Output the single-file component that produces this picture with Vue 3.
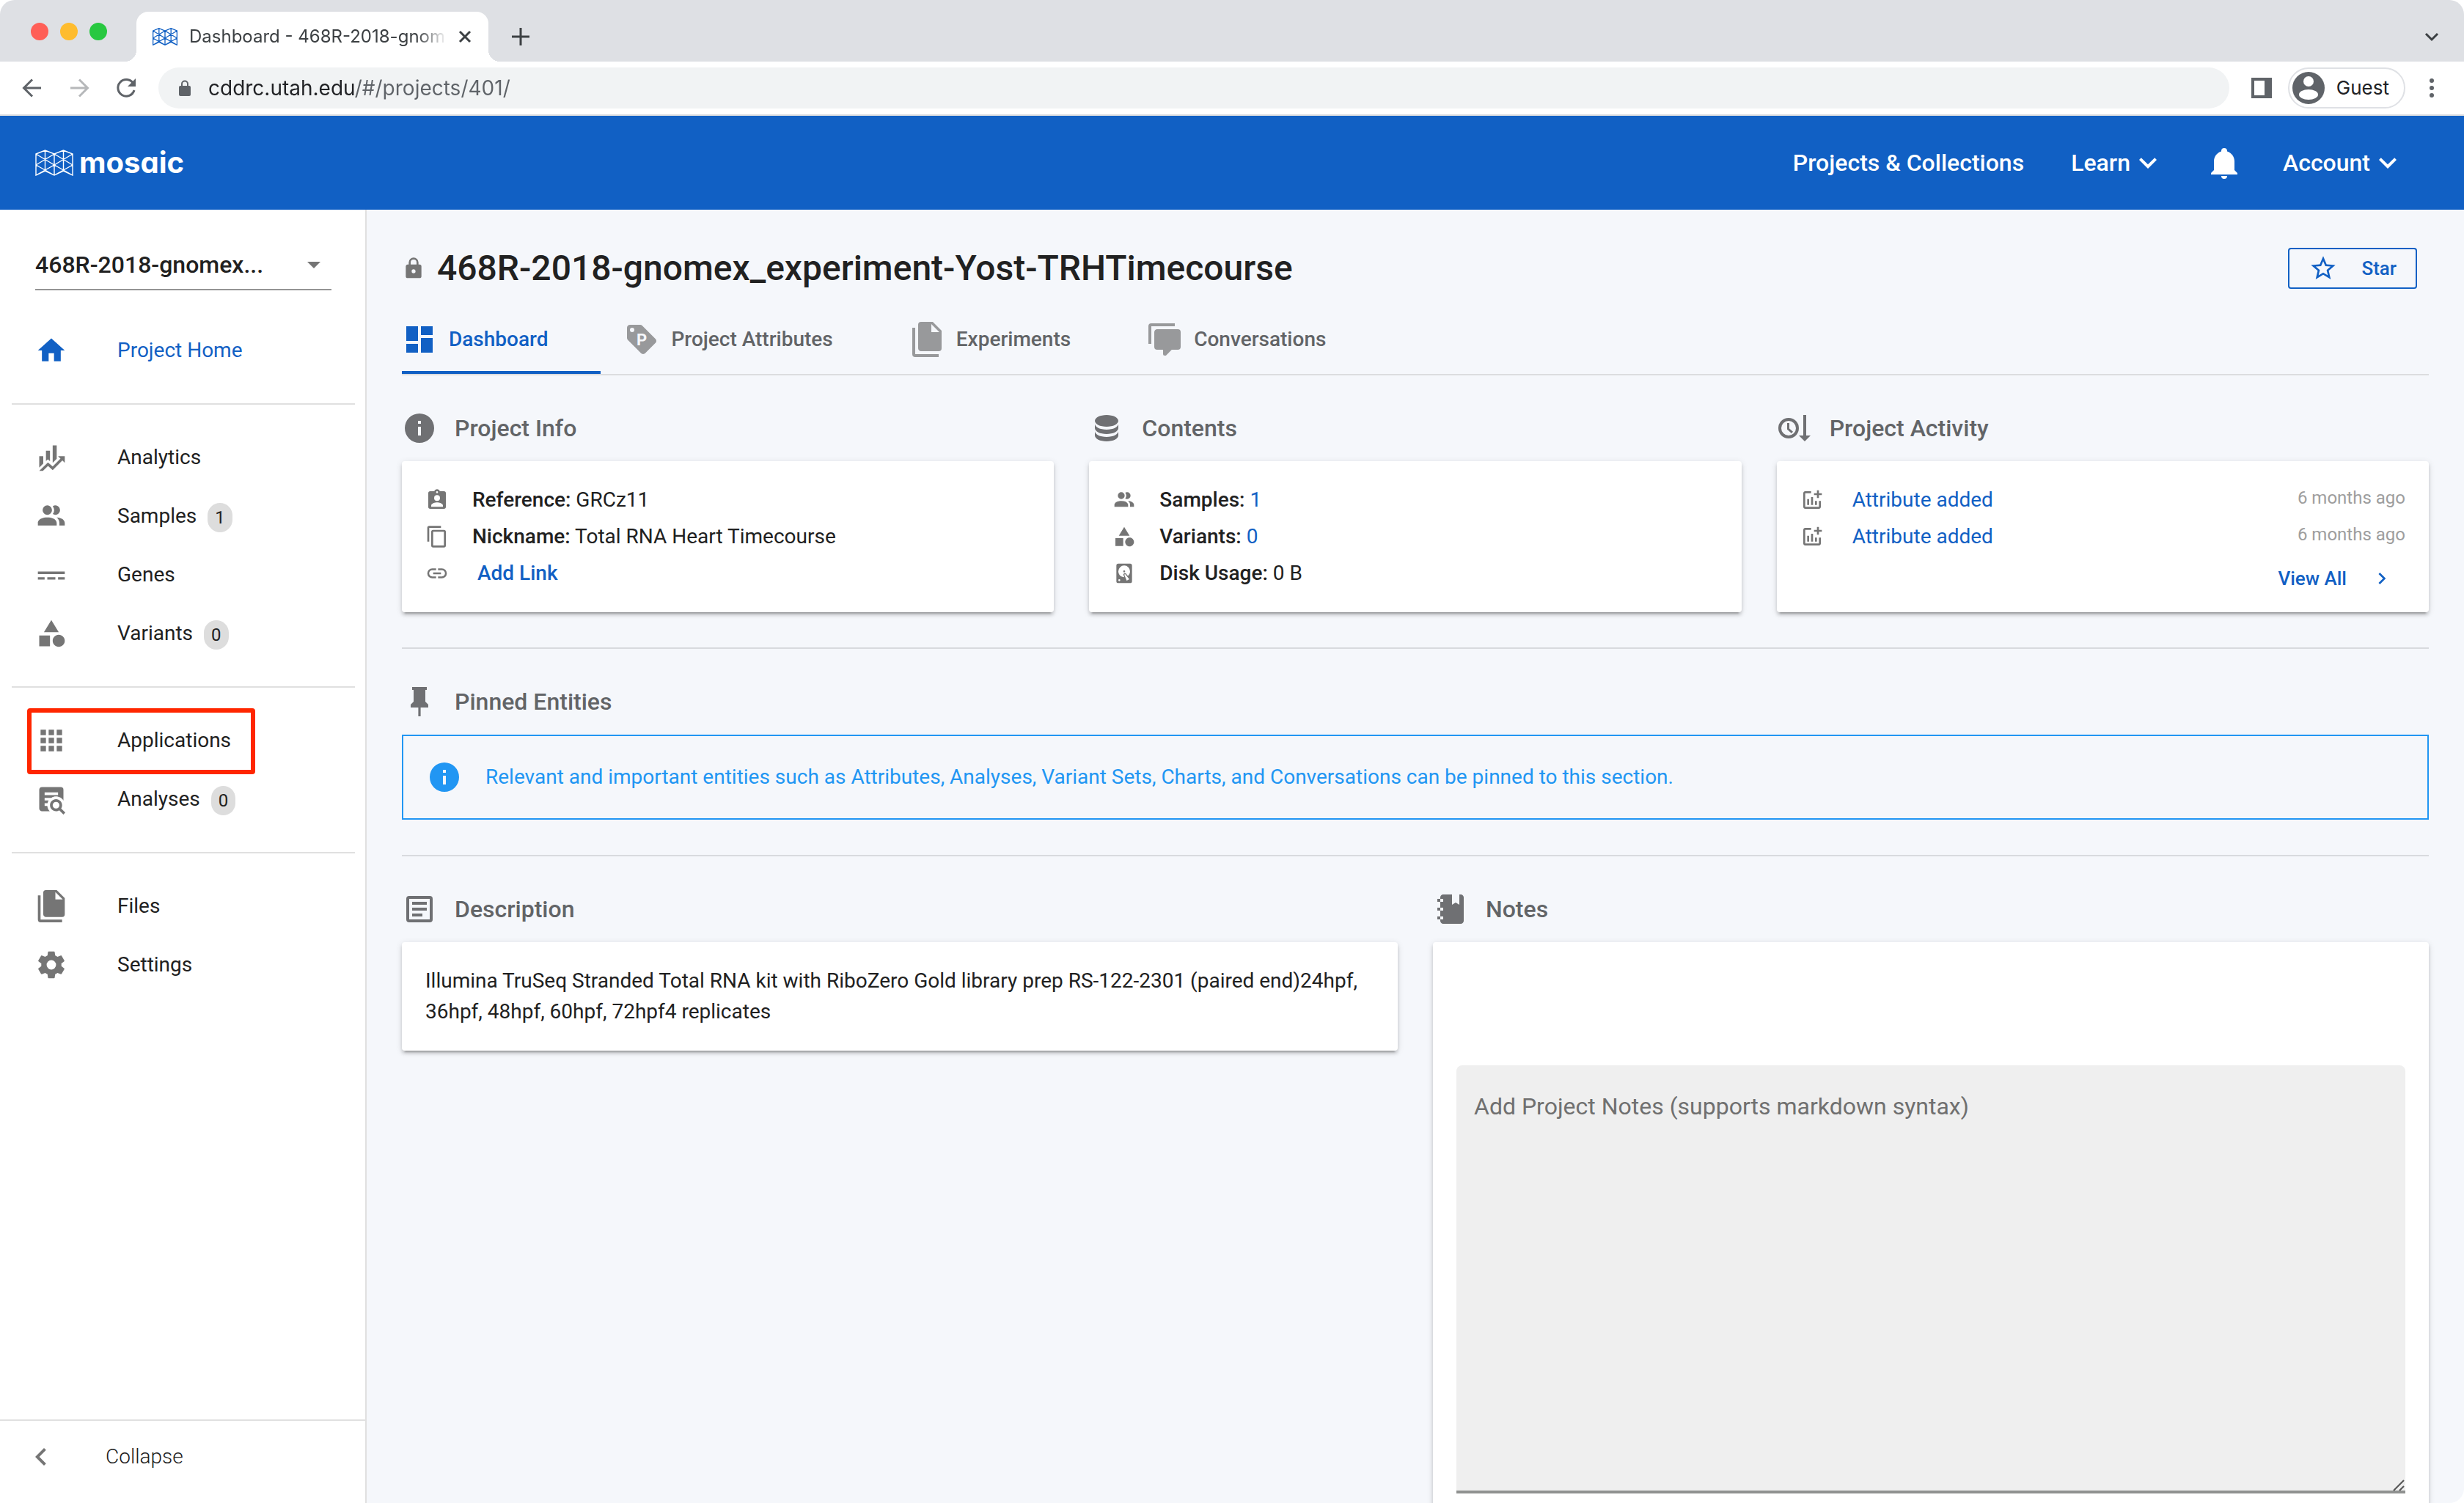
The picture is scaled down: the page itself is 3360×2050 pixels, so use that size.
<script setup>
const icons = {
  home: 'M10,20V14H14V20H19V12H22L12,3L2,12H5V20H10Z',
  finance: 'M6,16.5L3,19.44V11H6M11,14.66L9.43,13.32L8,14.64V7H11M16,13L13,16V3H16M18.81,12.81L17,11H22V16L20.21,14.21L13,21.36L9.53,18.34L5.75,22H3L9.47,15.66L13,18.64',
  people: 'M16 17V19H2V17S2 13 9 13 16 17 16 17M12.5 7.5A3.5 3.5 0 1 0 9 11A3.5 3.5 0 0 0 12.5 7.5M15.94 13A5.32 5.32 0 0 1 18 17V19H22V17S22 13.37 15.94 13M15 4A3.39 3.39 0 0 0 13.07 4.59A5 5 0 0 1 13.07 10.41A3.39 3.39 0 0 0 15 11A3.5 3.5 0 0 0 15 4Z',
  genes: 'M2,9.6H22V11.4H2ZM2,13.8H7V15.6H2ZM9,13.8H15V15.6H9ZM17,13.8H22V15.6H17Z',
  shape: 'M11,13.5V21.5H3V13.5H11M12,2L17.5,11H6.5L12,2M17.5,13C20,13 22,15 22,17.5C22,20 20,22 17.5,22C15,22 13,20 13,17.5C13,15 15,13 17.5,13Z',
  apps: 'M16,20H20V16H16M16,14H20V10H16M10,8H14V4H10M16,8H20V4H16M10,14H14V10H10M4,14H8V10H4M4,20H8V16H4M10,20H14V16H10M4,8H8V4H4V8Z',
  textSearch: 'M15.5,12C18,12 20,14 20,16.5C20,17.38 19.75,18.21 19.31,18.9L22.39,22L21,23.39L17.88,20.32C17.19,20.75 16.37,21 15.5,21C13,21 11,19 11,16.5C11,14 13,12 15.5,12M15.5,14A2.5,2.5 0 0,0 13,16.5A2.5,2.5 0 0,0 15.5,19A2.5,2.5 0 0,0 18,16.5A2.5,2.5 0 0,0 15.5,14M7,15V17H9C9.14,18.55 9.8,19.94 10.81,21H5C3.89,21 3,20.1 3,19V5C3,3.89 3.89,3 5,3H19A2,2 0 0,1 21,5V13.03C19.85,11.21 17.82,10 15.5,10C14.23,10 13.04,10.37 12.04,11H7V13H10C9.64,13.6 9.34,14.28 9.17,15H7M17,9V7H7V9H17Z',
  files: 'M15,7H20.5L15,1.5V7M8,0H16L22,6V18A2,2 0 0,1 20,20H8C6.89,20 6,19.1 6,18V2A2,2 0 0,1 8,0M4,4V22H20V24H4A2,2 0 0,1 2,22V4H4Z',
  cog: 'M12,15.5A3.5,3.5 0 0,1 8.5,12A3.5,3.5 0 0,1 12,8.5A3.5,3.5 0 0,1 15.5,12A3.5,3.5 0 0,1 12,15.5M19.43,12.97C19.47,12.65 19.5,12.33 19.5,12C19.5,11.67 19.47,11.34 19.43,11L21.54,9.37C21.73,9.22 21.78,8.95 21.66,8.73L19.66,5.27C19.54,5.05 19.27,4.96 19.05,5.05L16.56,6.05C16.04,5.66 15.5,5.32 14.87,5.07L14.5,2.42C14.46,2.18 14.25,2 14,2H10C9.75,2 9.54,2.18 9.5,2.42L9.13,5.07C8.5,5.32 7.96,5.66 7.44,6.05L4.95,5.05C4.73,4.96 4.46,5.05 4.34,5.27L2.34,8.73C2.21,8.95 2.27,9.22 2.46,9.37L4.57,11C4.53,11.34 4.5,11.67 4.5,12C4.5,12.33 4.53,12.65 4.57,12.97L2.46,14.63C2.27,14.78 2.21,15.05 2.34,15.27L4.34,18.73C4.46,18.95 4.73,19.03 4.95,18.95L7.44,17.94C7.96,18.34 8.5,18.68 9.13,18.93L9.5,21.58C9.54,21.82 9.75,22 10,22H14C14.25,22 14.46,21.82 14.5,21.58L14.87,18.93C15.5,18.67 16.04,18.34 16.56,17.94L19.05,18.95C19.27,19.03 19.54,18.95 19.66,18.73L21.66,15.27C21.78,15.05 21.73,14.78 21.54,14.63L19.43,12.97Z',
  lock: 'M12,17A2,2 0 0,0 14,15C14,13.89 13.1,13 12,13A2,2 0 0,0 10,15A2,2 0 0,0 12,17M18,8A2,2 0 0,1 20,10V20A2,2 0 0,1 18,22H6A2,2 0 0,1 4,20V10C4,8.89 4.9,8 6,8H7V6A5,5 0 0,1 12,1A5,5 0 0,1 17,6V8H18M12,3A3,3 0 0,0 9,6V8H15V6A3,3 0 0,0 12,3Z',
  star: 'M12,15.39L8.24,17.66L9.23,13.38L5.91,10.5L10.29,10.13L12,6.09L13.71,10.13L18.09,10.5L14.77,13.38L15.76,17.66M22,9.24L14.81,8.63L12,2L9.19,8.63L2,9.24L7.45,13.97L5.82,21L12,17.27L18.18,21L16.54,13.97L22,9.24Z',
  dashboard: 'M13,3V9H21V3M13,21H21V11H13M3,21H11V15H3M3,13H11V3H3V13Z',
  tag: 'M5.5,7A1.5,1.5 0 0,1 4,5.5A1.5,1.5 0 0,1 5.5,4A1.5,1.5 0 0,1 7,5.5A1.5,1.5 0 0,1 5.5,7M21.41,11.58L12.41,2.58C12.05,2.22 11.55,2 11,2H4C2.89,2 2,2.89 2,4V11C2,11.55 2.22,12.05 2.59,12.41L11.58,21.41C11.95,21.77 12.45,22 13,22C13.55,22 14.05,21.77 14.41,21.41L21.41,14.41C21.78,14.05 22,13.55 22,13C22,12.44 21.77,11.94 21.41,11.58Z',
  comments: 'M12,23A1,1 0 0,1 11,22V19H7A2,2 0 0,1 5,17V7C5,5.89 5.9,5 7,5H21A2,2 0 0,1 23,7V17A2,2 0 0,1 21,19H16.9L13.2,22.71C13,22.9 12.75,23 12.5,23V23H12M3,15H1V3A2,2 0 0,1 3,1H19V3H3V15Z',
  info: 'M13,9H11V7H13M13,17H11V11H13M12,2A10,10 0 0,0 2,12A10,10 0 0,0 12,22A10,10 0 0,0 22,12A10,10 0 0,0 12,2Z',
  database: 'M12,3C7.58,3 4,4.79 4,7C4,9.21 7.58,11 12,11C16.42,11 20,9.21 20,7C20,4.79 16.42,3 12,3M4,9V12C4,14.21 7.58,16 12,16C16.42,16 20,14.21 20,12V9C20,11.21 16.42,13 12,13C7.58,13 4,11.21 4,9M4,14V17C4,19.21 7.58,21 12,21C16.42,21 20,19.21 20,17V14C20,16.21 16.42,18 12,18C7.58,18 4,16.21 4,14Z',
  clipboard: 'M18,19H6V17.6C6,15.6 10,14.5 12,14.5C14,14.5 18,15.6 18,17.6M12,7A3,3 0 0,1 15,10A3,3 0 0,1 12,13A3,3 0 0,1 9,10A3,3 0 0,1 12,7M12,3A1,1 0 0,1 13,4A1,1 0 0,1 12,5A1,1 0 0,1 11,4A1,1 0 0,1 12,3M19,3H14.82C14.4,1.84 13.3,1 12,1C10.7,1 9.6,1.84 9.18,3H5A2,2 0 0,0 3,5V19A2,2 0 0,0 5,21H19A2,2 0 0,0 21,19V5A2,2 0 0,0 19,3Z',
  copy: 'M19,21H8V7H19M19,5H8A2,2 0 0,0 6,7V21A2,2 0 0,0 8,23H19A2,2 0 0,0 21,21V7A2,2 0 0,0 19,5M16,1H4A2,2 0 0,0 2,3V17H4V3H16V1Z',
  link: 'M3.9,12C3.9,10.29 5.29,8.9 7,8.9H11V7H7A5,5 0 0,0 2,12A5,5 0 0,0 7,17H11V15.1H7C5.29,15.1 3.9,13.71 3.9,12M8,13H16V11H8V13M17,7H13V8.9H17C18.71,8.9 20.1,10.29 20.1,12C20.1,13.71 18.71,15.1 17,15.1H13V17H17A5,5 0 0,0 22,12A5,5 0 0,0 17,7Z',
  disk: 'M6,2H18A2,2 0 0,1 20,4V20A2,2 0 0,1 18,22H6A2,2 0 0,1 4,20V4A2,2 0 0,1 6,2M12,4A6,6 0 0,0 6,10C6,13.31 8.69,16 12.1,16L11.22,13.77C10.95,13.29 11.11,12.68 11.59,12.4L12.45,11.9C12.93,11.63 13.54,11.79 13.82,12.27L15.74,14.69C17.12,13.59 18,11.9 18,10A6,6 0 0,0 12,4M12,9A1,1 0 0,1 13,10A1,1 0 0,1 12,11A1,1 0 0,1 11,10A1,1 0 0,1 12,9M7,18A1,1 0 0,0 6,19A1,1 0 0,0 7,20A1,1 0 0,0 8,19A1,1 0 0,0 7,18M12.09,13.27L14.58,19.58L17.17,18.08L12.95,12.77L12.09,13.27Z',
  addChart: 'M22 5v2h-3v3h-2V7h-3V5h3V2h2v3h3zm-3 14H5V5h6V3H5c-1.1 0-2 .9-2 2v14c0 1.1.9 2 2 2h14c1.1 0 2-.9 2-2v-6h-2v6zm-4-6v4h2v-4h-2zm-4 4h2V9h-2v8zm-2 0v-6H7v6h2z',
  right: 'M8.59,16.58L13.17,12L8.59,7.41L10,6L16,12L10,18L8.59,16.58Z',
  left: 'M15.41,16.58L10.83,12L15.41,7.41L14,6L8,12L14,18L15.41,16.58Z',
  down: 'M7.41,8.58L12,13.17L16.59,8.58L18,10L12,16L6,10L7.41,8.58Z',
  pin: 'M16,12V4H17V2H7V4H8V12L6,14V16H11.2V22H12.8V16H18V14L16,12Z',
  bell: 'M21,19V20H3V19L5,17V11C5,7.9 7.03,5.17 10,4.29C10,4.19 10,4.1 10,4A2,2 0 0,1 12,2A2,2 0 0,1 14,4C14,4.1 14,4.19 14,4.29C16.97,5.17 19,7.9 19,11V17L21,19M14,21A2,2 0 0,1 12,23A2,2 0 0,1 10,21',
  article: 'M5,3H19A2,2 0 0,1 21,5V19A2,2 0 0,1 19,21H5A2,2 0 0,1 3,19V5A2,2 0 0,1 5,3M5,5V19H19V5H5M7,7H17V9H7V7M7,11H17V13H7V11M7,15H14V17H7V15Z',
  notebook: 'M3,7V5H5V4C5,2.89 5.9,2 7,2H13V9L15.5,7.5L18,9V2H19C20.05,2 21,2.95 21,4V20C21,21.05 20.05,22 19,22H7C5.95,22 5,21.05 5,20V19H3V17H5V13H3V11H5V7H3M7,11H5V13H7V11M7,7V5H5V7H7M7,19V17H5V19H7Z',
  activity: 'M8,5A7,7 0 1,0 8,19A7,7 0 1,0 8,5M8,7A5,5 0 1,1 8,17A5,5 0 1,1 8,7M7,8.5H8.5V12.2L11,14.4L10,15.5L7,12.9ZM18,3H20V17H23L19,21L15,17H18Z',
}

const lattice = 'M1 6L13.5 1L26 6L38.5 1L51 6V35L38.5 29L26 35L13.5 29L1 35ZM13.5 1V29M26 6V35M38.5 1V29M1 6L26 21L51 6M1 21L26 6L51 21M1 21L26 35L51 21M1 35L26 21L51 35'

const navGroups = [
  [{ label: 'Project Home', icon: 'home', active: true }],
  [
    { label: 'Analytics', icon: 'finance' },
    { label: 'Samples', icon: 'people', count: 1 },
    { label: 'Genes', icon: 'genes' },
    { label: 'Variants', icon: 'shape', count: 0 },
  ],
  [
    { label: 'Applications', icon: 'apps', marked: true },
    { label: 'Analyses', icon: 'textSearch', count: 0 },
  ],
  [
    { label: 'Files', icon: 'files' },
    { label: 'Settings', icon: 'cog' },
  ],
]

const tabs = [
  { label: 'Dashboard', icon: 'dashboard', active: true },
  { label: 'Project Attributes', icon: 'tag', letter: 'P' },
  { label: 'Experiments', icon: 'files' },
  { label: 'Conversations', icon: 'comments' },
]
</script>

<template>
  <div class="window">
    <div class="tabstrip">
      <div class="lights"><i class="red"></i><i class="yellow"></i><i class="green"></i></div>
      <div class="browser-tab">
        <svg class="favicon" viewBox="0 0 52 36" preserveAspectRatio="none"><path :d="lattice" /></svg>
        <span class="tab-title">Dashboard - 468R-2018-gnom</span>
        <button class="plain" aria-label="Close tab">
          <svg width="20" height="20" viewBox="0 0 20 20"><path d="M3 3L17 17M17 3L3 17" class="line3" /></svg>
        </button>
      </div>
      <button class="plain new-tab" aria-label="New tab">
        <svg width="26" height="26" viewBox="0 0 26 26"><path d="M13 1V25M1 13H25" class="line3" /></svg>
      </button>
      <button class="plain tab-search" aria-label="Search tabs">
        <svg width="20" height="20" viewBox="0 0 20 20"><path d="M2 6L10 14L18 6" class="line3" /></svg>
      </button>
    </div>

    <div class="toolbar">
      <button class="plain" aria-label="Back">
        <svg width="32" height="32" viewBox="0 0 32 32"><path d="M28 16H5M16 4.500L4.500 16L16 27.500" class="line3" /></svg>
      </button>
      <button class="plain faded" aria-label="Forward">
        <svg width="32" height="32" viewBox="0 0 32 32"><path d="M4 16H27M16 4.500L27.500 16L16 27.500" class="line3" /></svg>
      </button>
      <button class="plain" aria-label="Reload">
        <svg width="32" height="32" viewBox="0 0 32 32"><path d="M25.500 9.500A11.300 11.300 0 1 0 27 19" class="line3" /><path d="M29 3V14H18Z" fill="currentColor" /></svg>
      </button>
      <div class="omnibox">
        <svg width="16" height="22" viewBox="0 0 16 22"><rect y="8" width="16" height="14" rx="2" fill="currentColor" /><path d="M4 9V5.500a4 4 0 0 1 8 0V9" fill="none" stroke="currentColor" stroke-width="2" /></svg>
        <input class="url" type="text" value="cddrc.utah.edu/#/projects/401/" aria-label="Address" />
      </div>
      <button class="plain side-panel" aria-label="Side panel">
        <svg width="28" height="28" viewBox="0 0 28 28"><path fill-rule="evenodd" d="M0 0H28V28H0ZM4 4V24H18V4Z" fill="currentColor" /></svg>
      </button>
      <button class="guest">
        <svg width="44" height="44" viewBox="0 0 44 44"><circle cx="22" cy="22" r="22" fill="#5f6368" /><circle cx="22" cy="13" r="7" fill="#fff" /><ellipse cx="22" cy="31" rx="13" ry="7" fill="#fff" /></svg>
        Guest
      </button>
      <button class="plain menu" aria-label="Menu">
        <svg width="8" height="28" viewBox="0 0 8 28"><circle cx="4" cy="4" r="3" /><circle cx="4" cy="14" r="3" /><circle cx="4" cy="24" r="3" /></svg>
      </button>
    </div>

    <header class="app-bar">
      <a class="brand" href="#"><svg viewBox="0 0 52 36"><path :d="lattice" /></svg>mosaic</a>
      <nav class="app-nav">
        <a href="#">Projects &amp; Collections</a>
        <button class="plain">Learn<svg class="i48" viewBox="0 0 24 24"><path :d="icons.down" /></svg></button>
        <button class="plain" aria-label="Notifications"><svg class="i48" viewBox="0 0 24 24"><path :d="icons.bell" /></svg></button>
        <button class="plain">Account<svg class="i48" viewBox="0 0 24 24"><path :d="icons.down" /></svg></button>
      </nav>
    </header>

    <div class="body">
      <aside class="sidebar">
        <div class="picker">
          <select aria-label="Project"><option>468R-2018-gnomex...</option></select>
          <svg width="18" height="9" viewBox="0 0 18 9"><path d="M0 0H18L9 9Z" /></svg>
        </div>
        <nav class="side-nav">
          <ul v-for="(group, g) in navGroups" :key="g">
            <li v-for="item in group" :key="item.label">
              <a href="#" :class="{ active: item.active, marked: item.marked }">
                <svg class="i44" viewBox="0 0 24 24"><path :d="icons[item.icon]" /></svg>
                <span>{{ item.label }}</span>
                <span v-if="item.count !== undefined" class="badge">{{ item.count }}</span>
              </a>
            </li>
          </ul>
        </nav>
        <button class="collapse"><svg class="i48" viewBox="0 0 24 24"><path :d="icons.left" /></svg>Collapse</button>
      </aside>

      <main class="content">
        <div class="title-row">
          <svg class="i32" viewBox="0 0 24 24"><path :d="icons.lock" /></svg>
          <h1>468R-2018-gnomex_experiment-Yost-TRHTimecourse</h1>
          <button class="star"><svg class="i40" viewBox="0 0 24 24"><path :d="icons.star" /></svg>Star</button>
        </div>

        <div class="tabs" role="tablist">
          <button v-for="tab in tabs" :key="tab.label" role="tab" :aria-selected="!!tab.active" :class="{ active: tab.active }">
            <svg class="i48" viewBox="0 0 24 24"><path :d="icons[tab.icon]" /><text v-if="tab.letter" x="12" y="16" text-anchor="middle">{{ tab.letter }}</text></svg>
            {{ tab.label }}
          </button>
        </div>

        <div class="columns three">
          <section>
            <h2><svg class="i48" viewBox="0 0 24 24"><path :d="icons.info" /></svg>Project Info</h2>
            <div class="card rows">
              <div class="row"><svg class="i32" viewBox="0 0 24 24"><path :d="icons.clipboard" /></svg><span><b>Reference:</b> GRCz11</span></div>
              <div class="row"><svg class="i32" viewBox="0 0 24 24"><path :d="icons.copy" /></svg><span><b>Nickname:</b> Total RNA Heart Timecourse</span></div>
              <div class="row link-row"><svg class="i32" viewBox="0 0 24 24"><path :d="icons.link" /></svg><a href="#" class="strong">Add Link</a></div>
            </div>
          </section>
          <section>
            <h2><svg class="i48" viewBox="0 0 24 24"><path :d="icons.database" /></svg>Contents</h2>
            <div class="card rows">
              <div class="row"><svg class="i32" viewBox="0 0 24 24"><path :d="icons.people" /></svg><span><b>Samples:</b> <a href="#">1</a></span></div>
              <div class="row"><svg class="i32" viewBox="0 0 24 24"><path :d="icons.shape" /></svg><span><b>Variants:</b> <a href="#">0</a></span></div>
              <div class="row"><svg class="i32" viewBox="0 0 24 24"><path :d="icons.disk" /></svg><span><b>Disk Usage:</b> 0 B</span></div>
            </div>
          </section>
          <section>
            <h2><svg class="i48" viewBox="0 0 24 24"><path :d="icons.activity" /></svg>Project Activity</h2>
            <div class="card rows">
              <div v-for="n in 2" :key="n" class="row link-row">
                <svg class="i32" viewBox="0 0 24 24"><path :d="icons.addChart" /></svg>
                <a href="#">Attribute added</a>
                <time>6 months ago</time>
              </div>
              <div class="view-all"><a href="#" class="strong">View All<svg class="i32" viewBox="0 0 24 24"><path :d="icons.right" /></svg></a></div>
            </div>
          </section>
        </div>

        <hr />

        <section>
          <h2><svg class="i48" viewBox="0 0 24 24"><path :d="icons.pin" /></svg>Pinned Entities</h2>
          <div class="alert"><svg class="i48" viewBox="0 0 24 24"><path :d="icons.info" /></svg>Relevant and important entities such as Attributes, Analyses, Variant Sets, Charts, and Conversations can be pinned to this section.</div>
        </section>

        <hr />

        <div class="columns two">
          <section>
            <h2><svg class="i48" viewBox="0 0 24 24"><path :d="icons.article" /></svg>Description</h2>
            <p class="card description">Illumina TruSeq Stranded Total RNA kit with RiboZero Gold library prep RS-122-2301 (paired end)24hpf, 36hpf, 48hpf, 60hpf, 72hpf4 replicates</p>
          </section>
          <section>
            <h2><svg class="i48" viewBox="0 0 24 24"><path :d="icons.notebook" /></svg><label for="notes">Notes</label></h2>
            <div class="card notes">
              <div class="field">
                <textarea id="notes" placeholder="Add Project Notes (supports markdown syntax)"></textarea>
                <svg class="grip" width="16" height="16" viewBox="0 0 16 16"><path d="M1 15L15 1M9 15L15 9" /></svg>
              </div>
            </div>
          </section>
        </div>
      </main>
    </div>
  </div>
</template>

<style>
body {
  margin: 0;
  background: #fff;
}
</style>

<style scoped>
*,
*::before,
*::after {
  box-sizing: border-box;
}
.window {
  display: flex;
  flex-direction: column;
  height: 100vh;
  overflow: hidden;
  border-radius: 20px;
  background: #fff;
  color: #212121;
  font: 400 28px/40px Roboto, sans-serif;
}
svg {
  display: block;
  flex: none;
  fill: currentColor;
}
a {
  color: #1160c4;
  text-decoration: none;
}
button {
  font: inherit;
  color: inherit;
  cursor: pointer;
}
.plain {
  display: flex;
  align-items: center;
  padding: 0;
  border: 0;
  background: none;
}
.line3 {
  fill: none;
  stroke: currentColor;
  stroke-width: 3;
}
.i32 { width: 32px; height: 32px; }
.i40 { width: 40px; height: 40px; }
.i44 { width: 44px; height: 44px; }
.i48 { width: 48px; height: 48px; }

/* Browser chrome */
.tabstrip {
  display: flex;
  flex: none;
  align-items: center;
  height: 84px;
  padding: 16px 34px 0 42px;
  background: #dee0e4;
  color: #3c4043;
  font: 400 24px/32px Inter, sans-serif;
}
.lights {
  display: flex;
  gap: 16px;
  height: 68px;
  padding-top: 15px;
}
.lights i {
  width: 24px;
  height: 24px;
  border-radius: 50%;
}
.red { background: #ff5f57; }
.yellow { background: #febc2e; }
.green { background: #28c840; }
.browser-tab {
  position: relative;
  display: flex;
  align-items: center;
  width: 480px;
  height: 68px;
  margin-left: 40px;
  padding: 0 22px;
  border-radius: 16px 16px 0 0;
  background: #fff;
}
.browser-tab::before,
.browser-tab::after {
  content: '';
  position: absolute;
  bottom: 0;
  width: 16px;
  height: 16px;
}
.browser-tab::before {
  left: -16px;
  background: radial-gradient(circle at 0 0, transparent 16px, #fff 16px);
}
.browser-tab::after {
  right: -16px;
  background: radial-gradient(circle at 100% 0, transparent 16px, #fff 16px);
}
.favicon {
  width: 34px;
  height: 36px;
  fill: none;
  stroke: #1160c4;
  stroke-width: 2;
  padding: 6px 0;
}
.tab-title {
  flex: 1;
  margin: 0 14px 0 16px;
  white-space: nowrap;
  mask-image: linear-gradient(to right, #000 88%, transparent);
}
.new-tab {
  margin-left: 31px;
}
.tab-search {
  margin-left: auto;
}
.toolbar {
  display: flex;
  flex: none;
  align-items: center;
  height: 74px;
  padding: 0 40px 0 28px;
  border-bottom: 2px solid #dadce0;
  color: #5f6368;
  font: 400 26px/32px Inter, sans-serif;
}
.toolbar > .plain + .plain {
  margin-left: 32px;
}
.faded {
  opacity: 0.45;
}
.omnibox {
  display: flex;
  flex: 1;
  align-items: center;
  height: 56px;
  margin-left: 28px;
  padding: 0 28px;
  border-radius: 28px;
  background: #f1f3f4;
}
.url {
  flex: 1;
  margin-left: 24px;
  padding: 0;
  border: 0;
  outline: 0;
  background: linear-gradient(to right, #202124 201px, #5f6368 201px) text;
  color: transparent;
  font: 400 28px/40px Inter, sans-serif;
}
.side-panel {
  margin-left: 30px;
}
.guest {
  display: flex;
  align-items: center;
  gap: 16px;
  height: 56px;
  margin-left: 22px;
  padding: 0 20px 0 4px;
  border: 2px solid #dfe1e5;
  border-radius: 28px;
  background: #fff;
  color: #202124;
}
.menu {
  margin-left: 32px;
}

/* Application bar */
.app-bar {
  display: flex;
  flex: none;
  align-items: center;
  justify-content: space-between;
  height: 128px;
  padding: 0 80px 0 48px;
  background: #1160c4;
  color: #fff;
}
.brand {
  display: flex;
  align-items: center;
  gap: 8px;
  color: #fff;
  font: 700 40px/48px Inter, sans-serif;
  font-feature-settings: 'cv11';
}
.brand svg {
  width: 52px;
  height: 36px;
  fill: none;
  stroke: #fff;
  stroke-width: 1.4;
}
.app-nav {
  display: flex;
  align-items: center;
  gap: 56px;
  font-size: 32px;
  font-weight: 500;
}
.app-nav a {
  margin-right: 8px;
  color: #fff;
}

/* Sidebar */
.body {
  display: flex;
  flex: 1;
  min-height: 0;
}
.sidebar {
  display: flex;
  flex: none;
  flex-direction: column;
  width: 500px;
  padding-top: 42px;
  border-right: 2px solid #e0e0e0;
}
.picker {
  display: flex;
  align-items: center;
  margin: 0 46px 42px 48px;
  border-bottom: 2px solid #949494;
}
.picker svg {
  margin: 0 15px 0 -33px;
  color: #757575;
  pointer-events: none;
}
.picker select {
  flex: 1;
  height: 66px;
  padding: 0;
  border: 0;
  outline: 0;
  appearance: none;
  background: none;
  color: #212121;
  font: 500 32px/40px Roboto, sans-serif;
}
.side-nav {
  flex: 1;
}
.side-nav ul {
  margin: 0;
  padding: 0;
  list-style: none;
}
.side-nav ul + ul::before {
  content: '';
  display: block;
  height: 2px;
  margin: 32px 14px 32px 16px;
  background: #e0e0e0;
}
.side-nav a {
  position: relative;
  display: flex;
  align-items: center;
  height: 80px;
  padding-left: 48px;
  color: #212121;
}
.side-nav svg {
  margin-right: 68px;
  color: #757575;
}
.side-nav .active,
.side-nav .active svg {
  color: #1160c4;
}
.marked::after {
  content: '';
  position: absolute;
  top: -4px;
  left: 37px;
  width: 311px;
  height: 90px;
  border: 6px solid #ff2600;
  border-radius: 4px;
}
.badge {
  height: 40px;
  margin: 4px 0 0 15px;
  padding: 0 10px;
  border-radius: 20px;
  background: #ddd;
  font-size: 24px;
}
.collapse {
  display: flex;
  flex: none;
  align-items: center;
  gap: 64px;
  height: 114px;
  padding: 0 32px 14px;
  border: 0;
  border-top: 2px solid #e0e0e0;
  background: none;
  font-weight: 300;
}
.collapse svg {
  color: #757575;
}

/* Main content */
.content {
  flex: 1;
  min-width: 0;
  padding: 52px 48px 0;
  background: #f5f7fb;
}
.title-row {
  display: flex;
  align-items: center;
  gap: 16px;
  height: 56px;
  padding-right: 16px;
}
.title-row > svg {
  color: #757575;
}
h1 {
  flex: 1;
  margin: 0;
  font-size: 48px;
  font-weight: 500;
}
.star {
  display: flex;
  align-items: center;
  gap: 32px;
  height: 56px;
  padding: 0 26px;
  border: 2px solid #1160c4;
  border-radius: 4px;
  background: none;
  color: #1160c4;
  font-size: 26px;
  font-weight: 500;
}
.tabs {
  display: flex;
  gap: 32px;
  margin: 20px 0 48px;
  border-bottom: 2px solid #dcdddf;
}
.tabs button {
  display: flex;
  align-items: center;
  gap: 16px;
  height: 96px;
  padding: 6px 72px 0 0;
  border: 0;
  border-bottom: 4px solid transparent;
  background: none;
  color: #626467;
  font-weight: 500;
}
.tabs svg {
  color: #98999b;
}
.tabs text {
  fill: #f5f7fb;
  font-size: 11px;
  font-weight: 700;
}
.tabs .active {
  border-color: #1160c4;
  color: #1160c4;
}
.tabs .active svg {
  color: #1160c4;
}
.columns {
  display: grid;
  gap: 48px;
  align-items: start;
}
.three {
  grid-template-columns: repeat(3, 1fr);
}
.two {
  grid-template-columns: repeat(2, 1fr);
}
h2 {
  display: flex;
  align-items: center;
  gap: 24px;
  height: 48px;
  margin: 0 0 21px;
  color: #626467;
  font-size: 32px;
  font-weight: 500;
}
h2 svg {
  color: #6f7073;
}
.card {
  margin: 0;
  padding: 28px 32px;
  border-radius: 4px;
  background: #fff;
  box-shadow: 0 6px 2px -4px rgba(0, 0, 0, 0.2), 0 4px 4px 0 rgba(0, 0, 0, 0.14), 0 2px 10px 0 rgba(0, 0, 0, 0.12);
}
.row {
  display: flex;
  align-items: center;
  gap: 32px;
  height: 50px;
}
.row svg {
  color: #757575;
}
.link-row {
  gap: 39px;
}
b,
.strong {
  font-weight: 500;
}
time {
  align-self: flex-start;
  margin-left: auto;
  color: #9e9e9e;
  font-size: 24px;
  line-height: 44px;
}
.view-all {
  height: 50px;
  padding: 14px 16px 0 0;
}
.view-all a {
  display: flex;
  align-items: center;
  justify-content: flex-end;
  gap: 32px;
  height: 36px;
  font-size: 26px;
}
hr {
  height: 2px;
  margin: 48px 0;
  border: 0;
  background: #d8dade;
}
.alert {
  display: flex;
  align-items: center;
  gap: 32px;
  height: 116px;
  padding: 0 32px;
  border: 2px solid #2196f3;
  color: #2196f3;
}
.description {
  padding: 32px;
  line-height: 42px;
}
.notes {
  padding: 168px 32px 32px;
}
.field {
  position: relative;
}
textarea {
  display: block;
  width: 100%;
  height: 584px;
  padding: 28px 24px;
  border: 0;
  border-bottom: 4px solid #8f9190;
  border-radius: 8px 8px 0 0;
  outline: 0;
  background: #efefef;
  font: 400 32px/56px Roboto, sans-serif;
  resize: none;
}
textarea::placeholder {
  color: #707070;
}
.grip {
  position: absolute;
  right: 1px;
  bottom: 3px;
  stroke: #555;
  stroke-width: 2;
}
</style>
